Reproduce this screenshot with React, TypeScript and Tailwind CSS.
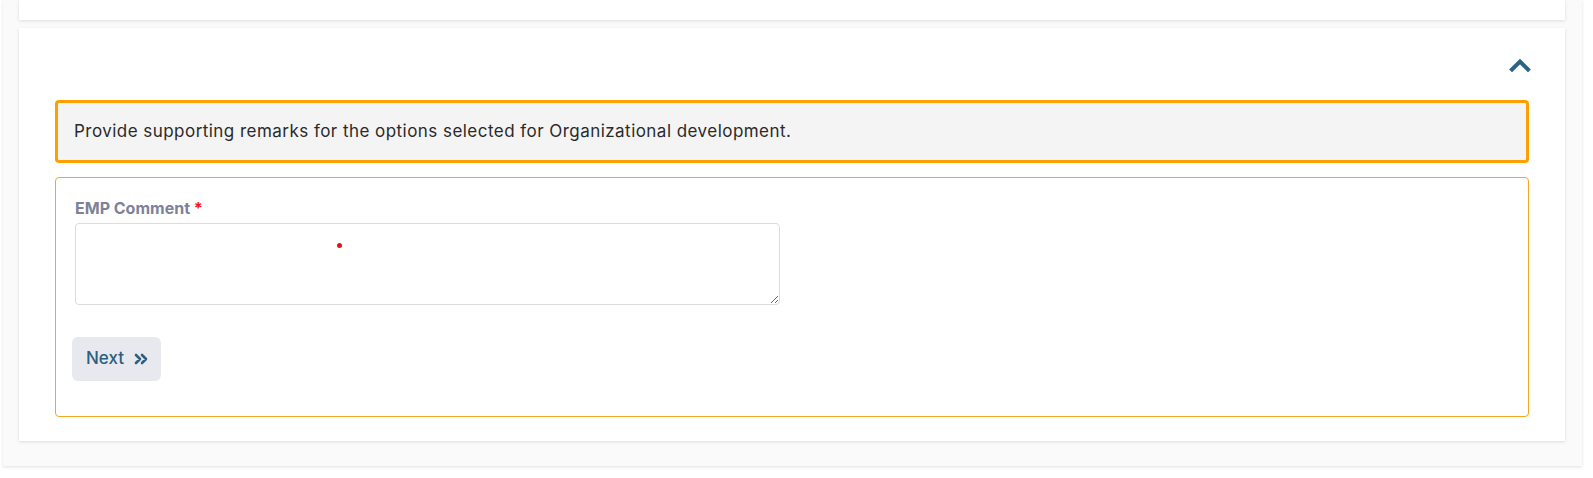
import React from 'react';

function ChevronUp() {
  return (
    <svg width="22" height="14" viewBox="0 0 22 14" className="block">
      <path d="M3 11.5 L11 3.5 L19 11.5" fill="none" stroke="#2b6385" strokeWidth="4" strokeLinecap="square" />
    </svg>
  );
}

function DoubleChevron() {
  return (
    <svg width="14" height="12" viewBox="0 0 14 12" className="block">
      <path d="M2 2 L6 6 L2 10 M8 2 L12 6 L8 10" fill="none" stroke="#2e5f80" strokeWidth="2.6" strokeLinecap="round" strokeLinejoin="round" />
    </svg>
  );
}

export default function App() {
  return (
    <div className="h-[478px] w-full overflow-hidden bg-white" style={{ fontFamily: 'Inter, "Noto Sans", sans-serif' }}>
      <div className="ml-[3px] w-[1579px] bg-[#fafafa] pl-4 pr-[17px] pb-[25px] shadow-[0_1px_3px_rgba(0,0,0,0.12)]">
        <div className="h-5 bg-white shadow-[0_1px_3px_rgba(0,0,0,0.12)]" />
        <div className="mt-2 bg-white px-9 pb-[24px] pt-[30px] shadow-[0_1px_3px_rgba(0,0,0,0.12)]">
          <div className="-mr-[2px] flex justify-end">
            <ChevronUp />
          </div>
          <div className="mt-[28px] flex h-[63px] items-center rounded border-[3px] border-[#ff9f00] bg-[#f4f4f4] px-4 text-[17px] tracking-[0.46px] text-[#2a2a2a]">
            Provide supporting remarks for the options selected for Organizational development.
          </div>
          <div className="mt-[14px] h-[240px] rounded border border-[#f5a623] px-[19px] pt-[20px]">
            <label className="block text-[16px] font-bold leading-5 text-[#7d8299]">
              EMP Comment <span className="text-[#ff1010]">*</span>
            </label>
            <div className="relative mt-[5px] w-[705px]">
              <textarea className="block h-[82px] w-full resize rounded border border-[#dcdcdc] bg-white" />
              <span className="absolute left-[262px] top-[20px] h-[5px] w-[5px] rounded-full bg-[#e2141a]" />
            </div>
            <button className="ml-[-3px] mt-8 flex h-11 items-center gap-[10px] rounded-md bg-[#e8e9ee] pl-[14px] pr-[13px] text-[17px] font-medium text-[#2e5f80]">
              Next
              <DoubleChevron />
            </button>
          </div>
        </div>
      </div>
    </div>
  );
}
